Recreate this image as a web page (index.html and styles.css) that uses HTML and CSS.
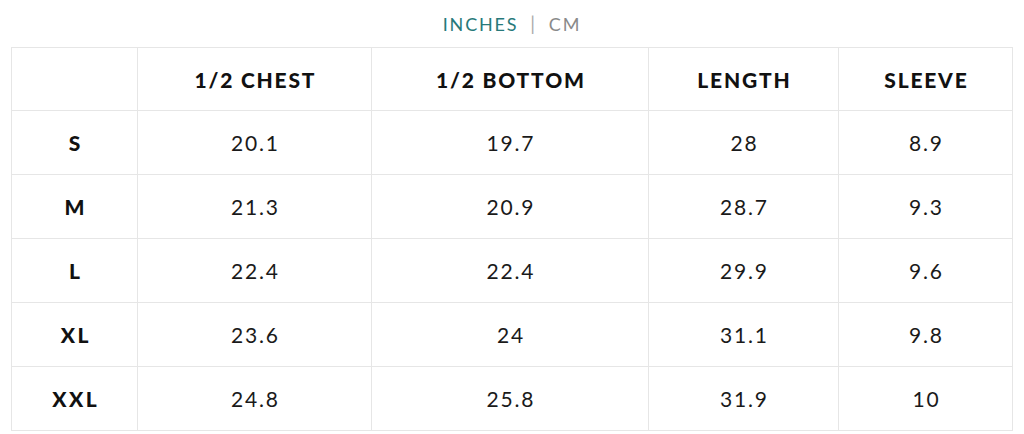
FILE: index.html
```html
<!DOCTYPE html>
<html>
<head>
<meta charset="utf-8">
<link rel="stylesheet" href="styles.css">
</head>
<body>
<div class="page">
  <div class="units">
    <span class="unit active">INCHES</span>
    <span class="sep">|</span>
    <span class="unit">CM</span>
  </div>
  <table class="sizes">
    <colgroup>
      <col class="c0"><col class="c1"><col class="c2"><col class="c3"><col class="c4">
    </colgroup>
    <thead>
      <tr><th></th><th>1/2 CHEST</th><th>1/2 BOTTOM</th><th>LENGTH</th><th>SLEEVE</th></tr>
    </thead>
    <tbody>
      <tr><th>S</th><td>20.1</td><td>19.7</td><td>28</td><td>8.9</td></tr>
      <tr><th>M</th><td>21.3</td><td>20.9</td><td>28.7</td><td>9.3</td></tr>
      <tr><th>L</th><td>22.4</td><td>22.4</td><td>29.9</td><td>9.6</td></tr>
      <tr><th>XL</th><td>23.6</td><td>24</td><td>31.1</td><td>9.8</td></tr>
      <tr><th>XXL</th><td>24.8</td><td>25.8</td><td>31.9</td><td>10</td></tr>
    </tbody>
  </table>
</div>
</body>
</html>
```
FILE: styles.css
```css
html, body {
  margin: 0;
  padding: 0;
  background: #fff;
}
body {
  font-family: "Lato", "Liberation Sans", sans-serif;
  color: #111;
}
.page {
  padding: 0 12px 0 11px;
}
.units {
  height: 47px;
  display: flex;
  justify-content: center;
  align-items: center;
  gap: 12px;
  font-size: 18px;
  letter-spacing: 1.8px;
  padding-left: 1px;
}
.unit { color: #8a8a8a; }
.unit.active { color: #27797a; }
.sep { color: #aaa; font-size: 19px; }
.sizes {
  border-collapse: collapse;
  table-layout: fixed;
  width: 1001px;
}
.c0 { width: 126px; }
.c1 { width: 234px; }
.c2 { width: 277px; }
.c3 { width: 190px; }
.c4 { width: 174px; }
.sizes th, .sizes td {
  border: 1px solid #e6e6e6;
  text-align: center;
  padding: 0;
  font-size: 21px;
}
.sizes thead th {
  height: 62px;
  font-weight: 900;
  letter-spacing: 1.8px;
  text-indent: 1.8px;
}
.sizes tbody tr { height: 64px; }
.sizes tbody th {
  font-weight: 900;
  letter-spacing: 2.5px;
  text-indent: 2.5px;
}
.sizes td {
  font-weight: 400;
  letter-spacing: 1.8px;
  text-indent: 1.8px;
  color: #1a1a1a;
}
```
